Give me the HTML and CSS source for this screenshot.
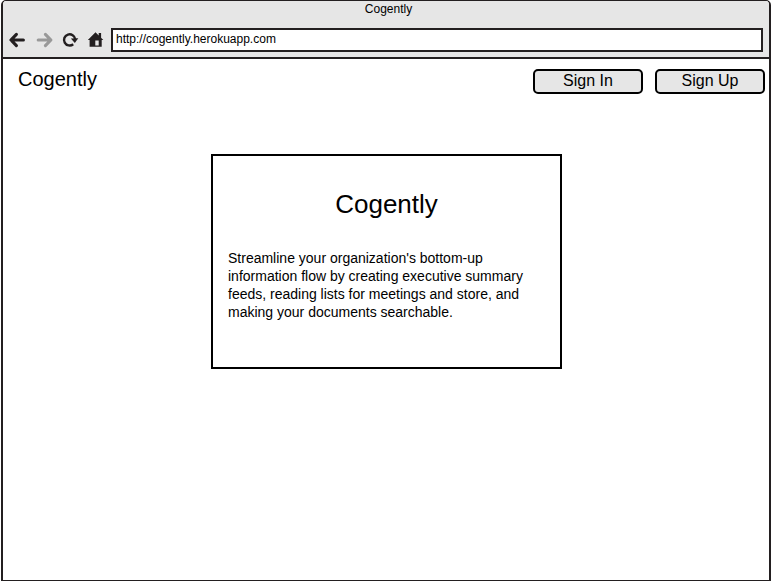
FILE: index.html
```html
<!DOCTYPE html>
<html lang="en">
<head>
<meta charset="utf-8">
<title>Cogently</title>
<link rel="stylesheet" href="styles.css">
</head>
<body>
<div class="window">
  <header class="chrome">
    <div class="window-title">Cogently</div>
    <div class="toolbar">
      <svg class="icons" width="108" height="24" viewBox="3 28 108 24" fill="none" stroke-linecap="round" stroke-linejoin="round" aria-hidden="true">
        <path d="M23.4 40H11.2M16.4 34.4L10.9 40l5.5 5.6" stroke="#231f20" stroke-width="3.1"/>
        <path d="M38.2 40h12.4M45.4 34.4L50.9 40l-5.5 5.6" stroke="#999" stroke-width="3.1"/>
        <path d="M73.2 44.2A5.6 5.6 0 1 1 75.2 39.2" stroke="#231f20" stroke-width="2.4" stroke-linecap="butt"/>
        <path d="M70.9 38.4l7.4-.2L74.8 43z" fill="#231f20"/>
        <path fill-rule="evenodd" d="M87.8 39.9L95.5 32.2l3.2 3.2v-2.3h2.4v4.6l2.2 2.2h-1.6v6.9H89.6v-6.9zM95.3 40.5h3.4v4.9h-3.4z" fill="#231f20"/>
      </svg>
      <div class="address">http://cogently.herokuapp.com</div>
    </div>
  </header>
  <nav class="nav">
    <div class="brand">Cogently</div>
    <div class="actions">
      <button class="button" type="button">Sign In</button>
      <button class="button" type="button">Sign Up</button>
    </div>
  </nav>
  <main class="card">
    <h1 class="heading">Cogently</h1>
    <p class="summary">Streamline your organization's bottom-up information flow by creating executive summary feeds, reading lists for meetings and store, and making your documents searchable.</p>
  </main>
</div>
</body>
</html>
```
FILE: styles.css
```css
* {
  box-sizing: border-box;
}

body {
  margin: 0;
  background: #fff;
  color: #000;
  font-family: "Liberation Sans", Arial, sans-serif;
}

.window {
  width: 770px;
  height: 581px;
  margin-left: 1px;
  border: 2px solid #231f20;
  border-width: 1px 2px;
  border-radius: 5px 5px 0 0;
  overflow: hidden;
}

.chrome {
  height: 58px;
  background: #e6e6e6;
  border-bottom: 2px solid #231f20;
}

.window-title {
  height: 27px;
  padding-left: 5px;
  font-size: 12px;
  line-height: 16px;
  text-align: center;
}

.toolbar {
  display: flex;
  padding-right: 6px;
}

.icons {
  flex: none;
}

.address {
  flex: 1;
  height: 24px;
  padding-left: 3px;
  border: 2px solid #231f20;
  background: #fff;
  font-size: 12px;
  line-height: 19px;
}

.nav {
  display: flex;
  justify-content: space-between;
  height: 95px;
  padding: 10px 4px 0 15px;
}

.brand {
  font-size: 20px;
  line-height: 20px;
}

.actions {
  display: flex;
  gap: 12px;
}

.button {
  width: 110px;
  height: 25px;
  padding: 0 0 2px;
  border: 2px solid #000;
  border-radius: 5px;
  background: #e6e6e6;
  color: #000;
  font: 16px/19px "Liberation Sans", Arial, sans-serif;
}

.card {
  width: 351px;
  height: 215px;
  margin-left: 208px;
  padding: 32px 15px 0;
  border: 2px solid #000;
}

.heading {
  margin: 0 0 29px;
  font-size: 26px;
  font-weight: 400;
  line-height: 32px;
  text-align: center;
}

.summary {
  margin: 0;
  font-size: 14px;
  line-height: 18px;
}
```
